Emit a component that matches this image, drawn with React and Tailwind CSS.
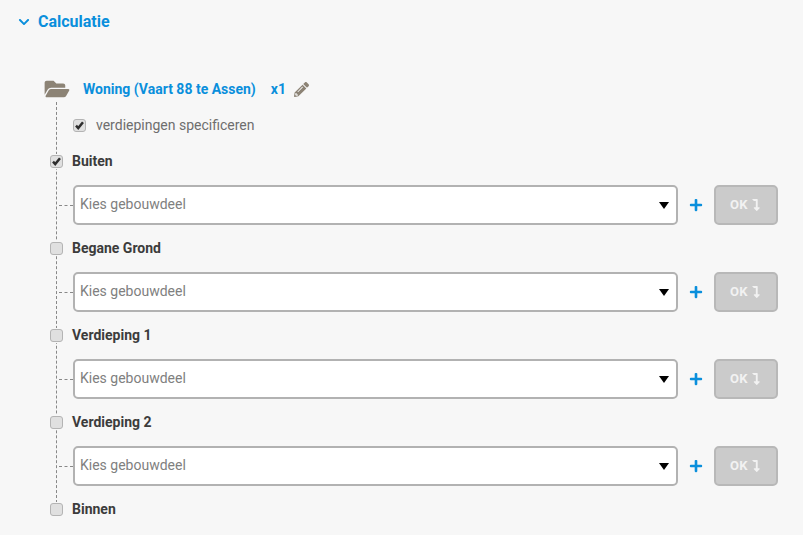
import { FaChevronDown, FaFolderOpen, FaLevelDownAlt, FaPencilAlt, FaPlus } from "react-icons/fa";

const FLOORS = [
    { name: "Buiten", checked: true },
    { name: "Begane Grond" },
    { name: "Verdieping 1" },
    { name: "Verdieping 2" },
];

const Check = ({ checked }) => (
    <span className="flex h-[13px] w-[13px] shrink-0 items-center justify-center rounded-[3px] border border-[#b4b4b4] bg-[#e0e0e0]">
        {checked && (
            <svg viewBox="0 0 12 12" className="h-[11px] w-[11px]">
                <path d="M2.2 6.2 L4.6 8.8 L9.8 2.4" fill="none" stroke="#2e2e2e" strokeWidth="2.7" />
            </svg>
        )}
    </span>
);

const FloorLabel = ({ name, checked }) => (
    <div className="flex h-[18px] items-center">
        <div className="-ml-[7px] bg-[#f7f7f7] py-px">
            <Check checked={checked} />
        </div>
        <span className="ml-[9px] text-sm font-bold text-[#3c3c3c]">{name}</span>
    </div>
);

const PartPicker = () => (
    <div className="flex h-[40px] items-center">
        <span className="ml-[2px] w-[14px] border-t border-dashed border-[#888]" />
        <div className="flex h-[40px] w-[605px] items-center justify-between rounded-[5px] border-2 border-[#b2b2b2] bg-white pl-[5px] pr-[7px]">
            <span className="pb-[2px] text-sm text-[#808080]">Kies gebouwdeel</span>
            <span className="h-0 w-0 border-x-[5px] border-t-[7px] border-x-transparent border-t-black" />
        </div>
        <FaPlus className="ml-[11px] h-[14px] w-[14px] text-[#0a8fdc]" />
        <button className="ml-[11px] flex h-[40px] w-[64px] items-center justify-center gap-[2px] rounded-[5px] border-2 border-[#b8b8b8] bg-[#cbcbcb] text-[13px] font-bold tracking-[0.5px] text-[#f2f2f2]">
            OK
            <FaLevelDownAlt className="h-[12px] w-[12px]" />
        </button>
    </div>
);

export default function App() {
    return (
        <div className="h-[535px] w-[803px] overflow-hidden bg-[#f7f7f7] font-['Roboto',sans-serif]">
            <div className="flex items-center pl-[18px] pt-[12px]">
                <FaChevronDown className="h-[12px] w-[12px] text-[#0a8fdc]" />
                <h2 className="ml-[8px] text-base font-bold leading-[19px] text-[#0a8fdc]">Calculatie</h2>
            </div>

            <div className="ml-[44px] mt-[45px] flex h-[26px] items-center">
                <FaFolderOpen className="h-[22px] w-[26px] text-[#8c8375]" />
                <span className="ml-[13px] text-sm font-bold text-[#0a8fdc]">Woning (Vaart 88 te Assen)</span>
                <span className="ml-[15px] text-sm font-bold text-[#0a8fdc]">x1</span>
                <FaPencilAlt className="ml-[8px] h-[15px] w-[15px] text-[#8c8375]" />
            </div>

            {/* tree, the dashed left border is the connecting line */}
            <div className="ml-[56px] h-[401px] border-l border-dashed border-[#888]">
                <div className="flex h-[44px] items-center pl-[16px] pt-[2px]">
                    <Check checked />
                    <span className="ml-[10px] text-sm text-[#6e6e6e]">verdiepingen specificeren</span>
                </div>
                <div className="mt-[6px] flex flex-col gap-[14px]">
                    {FLOORS.map((floor) => (
                        <div key={floor.name} className="flex flex-col gap-[15px]">
                            <FloorLabel name={floor.name} checked={floor.checked} />
                            <PartPicker />
                        </div>
                    ))}
                    <FloorLabel name="Binnen" />
                </div>
            </div>
        </div>
    );
}
